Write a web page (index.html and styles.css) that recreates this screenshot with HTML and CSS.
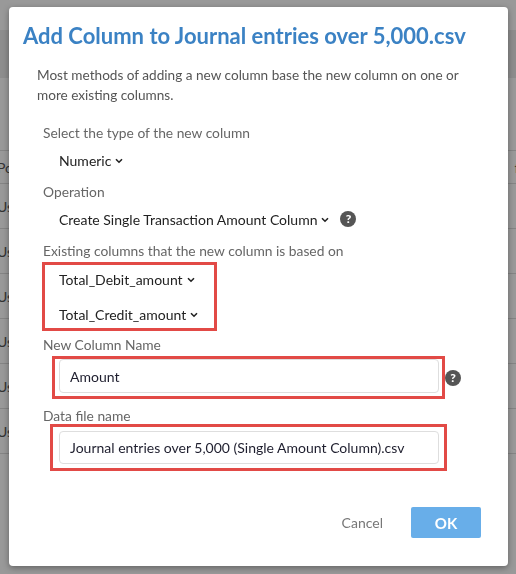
FILE: index.html
```html
<!DOCTYPE html>
<html>
<head>
<meta charset="utf-8">
<link rel="stylesheet" href="styles.css">
</head>
<body>
<div class="page">
  <div class="topbar"></div>
  <div class="toolbar"></div>
  <div class="spacer"></div>
  <div class="table">
    <div class="trow thead"><span class="c1">Po</span><span class="c2">fie</span></div>
    <div class="trow"><span class="c1">Us</span></div>
    <div class="trow"><span class="c1">Us</span></div>
    <div class="trow"><span class="c1">Us</span></div>
    <div class="trow"><span class="c1">Us</span></div>
    <div class="trow"><span class="c1">Us</span></div>
    <div class="trow"><span class="c1">Us</span></div>
  </div>
</div>
<div class="backdrop"></div>
<div class="dialog">
  <h1 class="title">Add Column to Journal entries over 5,000.csv</h1>
  <p class="desc">Most methods of adding a new column base the new column on one or more existing columns.</p>
  <div class="form">
    <div class="label">Select the type of the new column</div>
    <div class="select">Numeric <svg class="chev" width="8" height="6" viewBox="0 0 8 6"><path d="M1 1.2 L4 4.2 L7 1.2" fill="none" stroke="#222" stroke-width="1.6"/></svg></div>

    <div class="label">Operation</div>
    <div class="select">Create Single Transaction Amount Column <svg class="chev" width="8" height="6" viewBox="0 0 8 6"><path d="M1 1.2 L4 4.2 L7 1.2" fill="none" stroke="#222" stroke-width="1.6"/></svg><span class="help">?</span></div>

    <div class="label">Existing columns that the new column is based on</div>
    <div class="mark mark-cols">
      <div class="select">Total_Debit_amount <svg class="chev" width="8" height="6" viewBox="0 0 8 6"><path d="M1 1.2 L4 4.2 L7 1.2" fill="none" stroke="#222" stroke-width="1.6"/></svg></div>
      <div class="select">Total_Credit_amount <svg class="chev" width="8" height="6" viewBox="0 0 8 6"><path d="M1 1.2 L4 4.2 L7 1.2" fill="none" stroke="#222" stroke-width="1.6"/></svg></div>
    </div>

    <div class="label label-name">New Column Name</div>
    <div class="inputrow">
      <div class="mark mark-name"><div class="input">Amount</div></div>
      <span class="help">?</span>
    </div>

    <div class="label label-file">Data file name</div>
    <div class="mark mark-file"><div class="input">Journal entries over 5,000 (Single Amount Column).csv</div></div>
  </div>
  <div class="footer">
    <span class="btn-cancel">Cancel</span>
    <span class="btn-ok">OK</span>
  </div>
</div>
</body>
</html>
```
FILE: styles.css
```css
html, body {
  margin: 0;
  padding: 0;
  width: 516px;
  height: 574px;
  overflow: hidden;
  font-family: Lato, "Open Sans", sans-serif;
  background: #fff;
}

.page {
  width: 516px;
  height: 574px;
  overflow: hidden;
}

.topbar {
  height: 30px;
  background: #fff;
}

.toolbar {
  height: 48px;
  background: #ebebeb;
}

.spacer {
  height: 72px;
}

.trow {
  height: 44px;
  border-bottom: 1px solid #dcdcdc;
  display: flex;
  align-items: center;
  font-size: 14px;
  color: #555;
}

.thead {
  height: 32px;
  border-top: 1px solid #dcdcdc;
}

.c1 {
  margin-left: -3px;
}

.c2 {
  margin-left: auto;
  margin-right: -14px;
}

.backdrop {
  position: fixed;
  inset: 0;
  background: rgba(0, 0, 0, 0.4);
}

.dialog {
  position: absolute;
  left: 9px;
  top: 7px;
  width: 499px;
  height: 559px;
  box-sizing: border-box;
  background: #fff;
  border-radius: 4px;
  box-shadow: 0 2px 6px rgba(0, 0, 0, 0.35);
  padding: 14px 27px 28px 14px;
  display: flex;
  flex-direction: column;
}

.title {
  margin: 0;
  font-size: 22px;
  line-height: 30px;
  font-weight: 700;
  color: #3b82c4;
}

.desc {
  margin: 14px 0 0 14px;
  font-size: 13.6px;
  line-height: 20px;
  color: #555;
}

.form {
  margin: 18px 0 0 20px;
  display: flex;
  flex-direction: column;
  align-items: flex-start;
}

.label {
  font-size: 13.8px;
  line-height: 20px;
  color: #666;
}

.select {
  display: flex;
  align-items: center;
  height: 28px;
  margin: 3px 0 8px;
  padding-left: 16px;
  font-size: 14px;
  color: #222;
}

.chev {
  margin-left: 4px;
  margin-top: 1px;
}

.help {
  display: inline-flex;
  align-items: center;
  justify-content: center;
  width: 16px;
  height: 16px;
  border-radius: 50%;
  background: #555;
  color: #fff;
  font-size: 12px;
  font-weight: 900;
  line-height: 16px;
  margin-left: 11px;
}

.mark {
  border: 3px solid #e24a46;
  box-sizing: border-box;
}

.mark-cols {
  width: 175px;
  margin: 1px 0 0 -1px;
  padding: 0 0 0 14px;
}

.mark-cols .select {
  padding-left: 0;
  margin: 0;
}

.mark-cols .select + .select {
  margin-top: 7px;
}

.label-name {
  margin-top: 4px;
}

.inputrow {
  display: flex;
  align-items: center;
  margin: 1px 0 0 9px;
}

.inputrow .help {
  margin-left: 0;
}

.mark-name {
  width: 393px;
  padding: 0 3px 3px 4px;
}

.input {
  height: 34px;
  box-sizing: border-box;
  border: 1px solid #dedede;
  border-radius: 4px;
  padding: 0 10px;
  display: flex;
  align-items: center;
  font-size: 14px;
  color: #1e1e2e;
}

.label-file {
  margin-top: 7px;
}

.mark-file {
  width: 397px;
  margin: -2px 0 0 7px;
  padding: 4px 5px 4px 6px;
}

.mark-file .input {
  height: 33px;
}

.footer {
  margin-top: auto;
  display: flex;
  justify-content: flex-end;
  align-items: center;
  gap: 28px;
}

.btn-cancel {
  font-size: 14px;
  color: #777;
}

.btn-ok {
  width: 70px;
  height: 31px;
  display: flex;
  align-items: center;
  justify-content: center;
  background: #68aee9;
  color: #fff;
  font-weight: 700;
  font-size: 15px;
  border-radius: 2px;
}
```
